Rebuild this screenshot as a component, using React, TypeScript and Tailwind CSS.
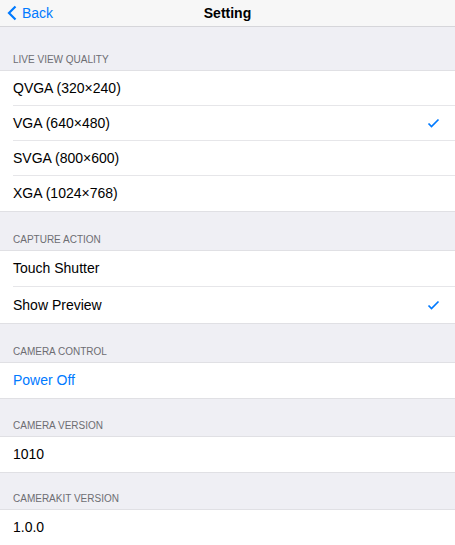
import React from "react";

type Row = { label: string; checked?: boolean; blue?: boolean };
type Group = { title: string; rows: Row[]; head: string; rowH: string };

const groups: Group[] = [
  {
    title: "LIVE VIEW QUALITY",
    head: "h-[43px]",
    rowH: "h-[35px]",
    rows: [
      { label: "QVGA (320×240)" },
      { label: "VGA (640×480)", checked: true },
      { label: "SVGA (800×600)" },
      { label: "XGA (1024×768)" },
    ],
  },
  {
    title: "CAPTURE ACTION",
    head: "h-[38px]",
    rowH: "h-[36px]",
    rows: [{ label: "Touch Shutter" }, { label: "Show Preview", checked: true }],
  },
  {
    title: "CAMERA CONTROL",
    head: "h-[38px]",
    rowH: "h-[35px]",
    rows: [{ label: "Power Off", blue: true }],
  },
  { title: "CAMERA VERSION", head: "h-[37px]", rowH: "h-[35px]", rows: [{ label: "1010" }] },
  { title: "CAMERAKIT VERSION", head: "h-[36px]", rowH: "h-[35px]", rows: [{ label: "1.0.0" }] },
];

const Check = () => (
  <svg width="13" height="10" viewBox="0 0 13 10" fill="none">
    <path d="M1.5 5.5 L4.5 8.5 L11.5 1.5" stroke="#007aff" strokeWidth="1.7" />
  </svg>
);

const App = () => {
  return (
    <div
      className="w-[455px] h-[545px] overflow-hidden bg-[#efeff4] text-black"
      style={{ fontFamily: '"Liberation Sans", Arial, sans-serif' }}
    >
      {/* nav bar */}
      <div className="h-[27px] bg-[#f7f7f7] border-b border-[#d6d6da] flex items-center relative">
        <div className="flex items-center pl-[7px] gap-[5px] text-[#007aff]">
          <svg width="10" height="16" viewBox="0 0 10 16" fill="none">
            <path d="M8.5 1.5 L2 8 L8.5 14.5" stroke="#007aff" strokeWidth="2.2" />
          </svg>
          <span className="text-[14px] leading-none">Back</span>
        </div>
        <span className="absolute left-0 right-0 text-center text-[14px] font-bold leading-none pointer-events-none">
          Setting
        </span>
      </div>

      {groups.map((group, gi) => (
        <div key={gi}>
          {/* section header */}
          <div
            className={`flex items-end pl-[13px] pb-[4px] text-[10px] leading-[12px] text-[#6d6d72] ${group.head}`}
          >
            {group.title}
          </div>

          {/* rows */}
          <div className="bg-white border-y border-[#e0e0e4]">
            {group.rows.map((row, ri) => (
              <div key={ri} className="pl-[13px]">
                <div
                  className={`flex items-center justify-between pr-[15px] ${group.rowH} ${
                    ri < group.rows.length - 1 ? "border-b border-[#e6e6e9]" : ""
                  }`}
                >
                  <span
                    className={`text-[14px] ${row.blue ? "text-[#007aff]" : "text-black"}`}
                  >
                    {row.label}
                  </span>
                  {row.checked && <Check />}
                </div>
              </div>
            ))}
          </div>
        </div>
      ))}
    </div>
  );
};

export default App;
